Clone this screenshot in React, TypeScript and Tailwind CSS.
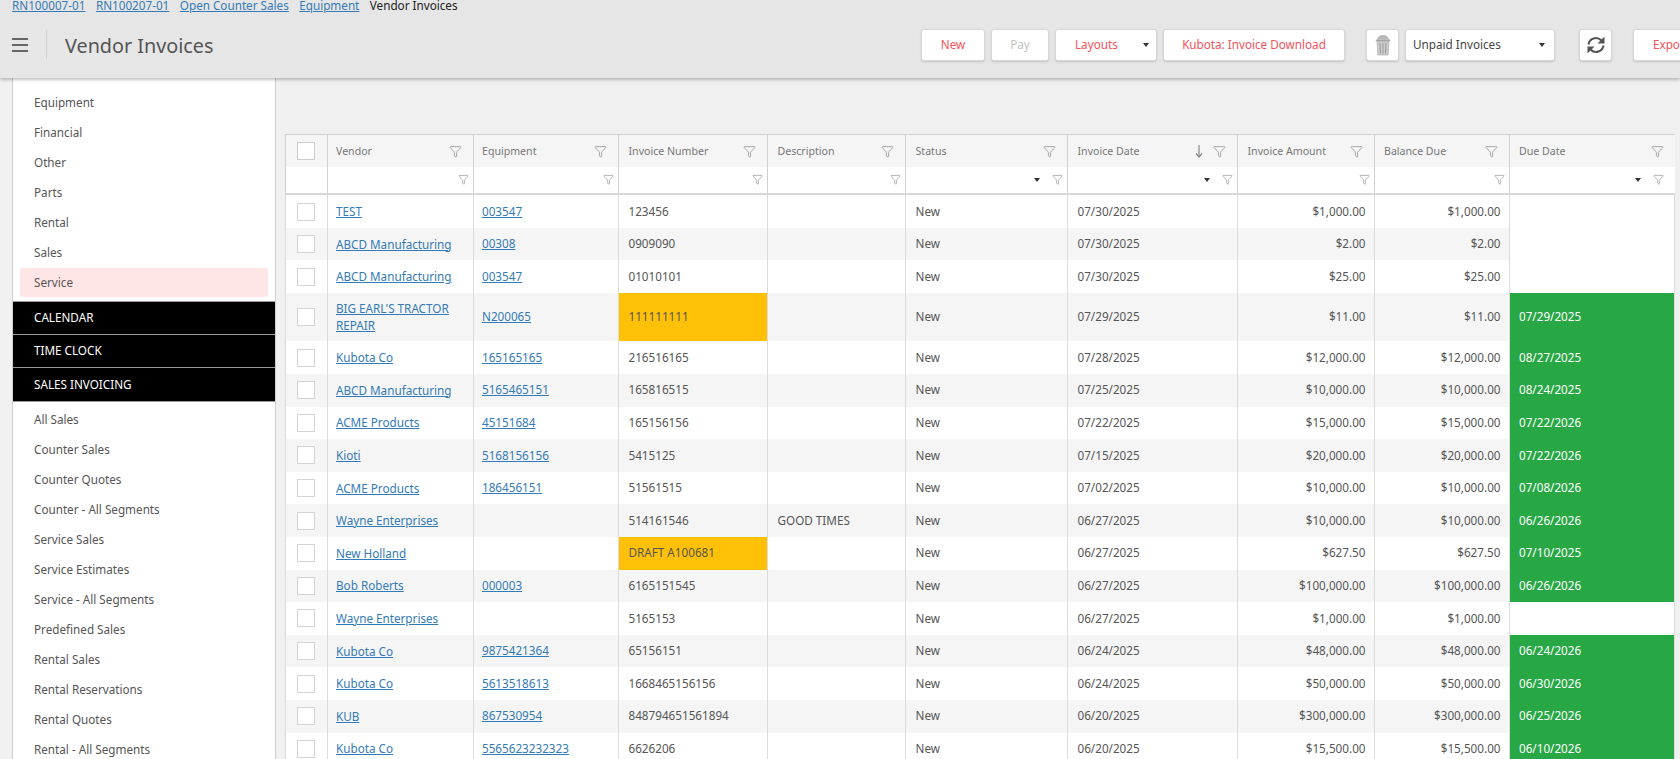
import { Filter } from 'lucide-react'

const FONT = "font-['Noto_Sans','Open_Sans',sans-serif]"
const GRID = 'grid grid-cols-[42px_146px_145px_149px_138px_162px_170px_136.5px_135px_166px]'

const BREADCRUMBS = ['RN100007-01', 'RN100207-01', 'Open Counter Sales', 'Equipment']

const TOP_ITEMS = ['Equipment', 'Financial', 'Other', 'Parts', 'Rental', 'Sales']
const BLACK_ITEMS = ['CALENDAR', 'TIME CLOCK', 'SALES INVOICING']
const BOTTOM_ITEMS = [
  'All Sales',
  'Counter Sales',
  'Counter Quotes',
  'Counter - All Segments',
  'Service Sales',
  'Service Estimates',
  'Service - All Segments',
  'Predefined Sales',
  'Rental Sales',
  'Rental Reservations',
  'Rental Quotes',
  'Rental - All Segments',
]

const COLUMNS = [
  { label: 'Vendor' },
  { label: 'Equipment' },
  { label: 'Invoice Number' },
  { label: 'Description' },
  { label: 'Status', select: true },
  { label: 'Invoice Date', select: true, sorted: true },
  { label: 'Invoice Amount' },
  { label: 'Balance Due' },
  { label: 'Due Date', select: true },
]

type Row = {
  vendor: string
  equipment: string
  number: string
  description?: string
  date: string
  amount: string
  due: string
  flagged?: boolean
  tall?: boolean
}

const ROWS: Row[] = [
  { vendor: 'TEST', equipment: '003547', number: '123456', date: '07/30/2025', amount: '$1,000.00', due: '' },
  { vendor: 'ABCD Manufacturing', equipment: '00308', number: '0909090', date: '07/30/2025', amount: '$2.00', due: '' },
  { vendor: 'ABCD Manufacturing', equipment: '003547', number: '01010101', date: '07/30/2025', amount: '$25.00', due: '' },
  { vendor: "BIG EARL'S TRACTOR REPAIR", equipment: 'N200065', number: '111111111', date: '07/29/2025', amount: '$11.00', due: '07/29/2025', flagged: true, tall: true },
  { vendor: 'Kubota Co', equipment: '165165165', number: '216516165', date: '07/28/2025', amount: '$12,000.00', due: '08/27/2025' },
  { vendor: 'ABCD Manufacturing', equipment: '5165465151', number: '165816515', date: '07/25/2025', amount: '$10,000.00', due: '08/24/2025' },
  { vendor: 'ACME Products', equipment: '45151684', number: '165156156', date: '07/22/2025', amount: '$15,000.00', due: '07/22/2026' },
  { vendor: 'Kioti', equipment: '5168156156', number: '5415125', date: '07/15/2025', amount: '$20,000.00', due: '07/22/2026' },
  { vendor: 'ACME Products', equipment: '186456151', number: '51561515', date: '07/02/2025', amount: '$10,000.00', due: '07/08/2026' },
  { vendor: 'Wayne Enterprises', equipment: '', number: '514161546', description: 'GOOD TIMES', date: '06/27/2025', amount: '$10,000.00', due: '06/26/2026' },
  { vendor: 'New Holland', equipment: '', number: 'DRAFT A100681', date: '06/27/2025', amount: '$627.50', due: '07/10/2025', flagged: true },
  { vendor: 'Bob Roberts', equipment: '000003', number: '6165151545', date: '06/27/2025', amount: '$100,000.00', due: '06/26/2026' },
  { vendor: 'Wayne Enterprises', equipment: '', number: '5165153', date: '06/27/2025', amount: '$1,000.00', due: '' },
  { vendor: 'Kubota Co', equipment: '9875421364', number: '65156151', date: '06/24/2025', amount: '$48,000.00', due: '06/24/2026' },
  { vendor: 'Kubota Co', equipment: '5613518613', number: '1668465156156', date: '06/24/2025', amount: '$50,000.00', due: '06/30/2026' },
  { vendor: 'KUB', equipment: '867530954', number: '848794651561894', date: '06/20/2025', amount: '$300,000.00', due: '06/25/2026' },
  { vendor: 'Kubota Co', equipment: '5565623232323', number: '6626206', date: '06/20/2025', amount: '$15,500.00', due: '06/10/2026' },
]

function Caret() {
  return <span className="h-0 w-0 border-x-[3.5px] border-t-[4px] border-x-transparent border-t-[#333]" />
}

function ToolButton({ label, muted, caret, className }: { label: string; muted?: boolean; caret?: boolean; className: string }) {
  return (
    <button
      className={`relative flex h-8 shrink-0 items-center justify-center rounded-[3px] border border-[#d8d8d8] bg-white text-[11.7px] shadow-[0_1px_2px_rgba(0,0,0,0.15)] ${muted ? 'text-[#c4c4c4]' : 'text-[#f4525a]'} ${className}`}
    >
      {label}
      {caret && (
        <span className="absolute right-[7px] top-[13px] flex">
          <Caret />
        </span>
      )}
    </button>
  )
}

function Header() {
  return (
    <header className="relative z-10 h-[78px] shrink-0 bg-[#e6e6e6] shadow-[0_1px_4px_rgba(0,0,0,0.35)]">
      <div className="flex h-[11px] items-center gap-[10.5px] pl-3 text-[11.7px] leading-none">
        {BREADCRUMBS.map((b) => (
          <a key={b} className="text-[#337ab7] underline">
            {b}
          </a>
        ))}
        <span className="text-[#222]">Vendor Invoices</span>
      </div>
      <div className="flex h-[67px] items-center overflow-hidden">
        <div className="ml-3 flex w-4 shrink-0 flex-col gap-[4px]">
          <span className="h-[2px] bg-[#666]" />
          <span className="h-[2px] bg-[#666]" />
          <span className="h-[2px] bg-[#666]" />
        </div>
        <span className="ml-[18px] h-[29px] w-px shrink-0 bg-[#d2d2d2]" />
        <h1 className="ml-[18px] w-[856px] shrink-0 pt-[2px] text-[19.8px] text-[#555]">Vendor Invoices</h1>
        <ToolButton label="New" className="w-[64px]" />
        <ToolButton label="Pay" muted className="ml-[6px] w-[58px]" />
        <ToolButton label="Layouts" caret className="ml-[6px] w-[102px] justify-start pl-[19px]" />
        <ToolButton label="Kubota: Invoice Download" className="ml-[6px] w-[182px]" />
        <button className="ml-[21px] flex h-8 w-[33px] shrink-0 items-center justify-center rounded-[3px] border border-[#d8d8d8] bg-white shadow-[0_1px_2px_rgba(0,0,0,0.15)]">
          <svg width="16" height="22" viewBox="0 0 16 22">
            <path d="M2 5.500C2.500 2.500 5 1 8 1s5.500 1.500 6 4.500z" fill="#b9b9b9" />
            <path d="M.8 5.500h14.400v1.700H.8z" fill="#a5a5a5" />
            <path d="M2 7.500h12l-.9 13.500H2.900z" fill="#cdcdcd" stroke="#a5a5a5" strokeWidth=".6" />
            <path d="M5 9l.4 10.500M8 9v10.500M11 9l-.4 10.500" stroke="#999" strokeWidth="1" />
          </svg>
        </button>
        <div className="relative ml-[6px] flex h-8 w-[150px] shrink-0 items-center rounded-[3px] border border-[#d8d8d8] bg-white pl-[7px] text-[11.7px] text-[#444] shadow-[0_1px_2px_rgba(0,0,0,0.15)]">
          Unpaid Invoices
          <span className="absolute right-[9px] top-[13px] flex">
            <Caret />
          </span>
        </div>
        <button className="ml-[24px] flex h-8 w-[33px] shrink-0 items-center justify-center rounded-[3px] border border-[#d8d8d8] bg-white shadow-[0_1px_2px_rgba(0,0,0,0.15)]">
          <svg width="20" height="20" viewBox="0 0 20 20" fill="none" stroke="#555" strokeWidth="2">
            <path d="M2.500 9.500A7.500 7.500 0 0 1 15.200 5.200L16.500 6.500" />
            <path d="M18.500 1.500V8.500H11.500z" fill="#555" stroke="none" />
            <path d="M17.500 10.500A7.500 7.500 0 0 1 4.800 14.800L3.500 13.500" />
            <path d="M1.500 18.500V11.500H8.500z" fill="#555" stroke="none" />
          </svg>
        </button>
        <ToolButton label="Export" className="ml-[21px] w-[76px]" />
      </div>
    </header>
  )
}

function SideItem({ label }: { label: string }) {
  return <div className="flex h-[30px] items-center pl-[21px] text-[11.7px] text-[#555]">{label}</div>
}

function Sidebar() {
  return (
    <aside className="ml-3 w-[263.5px] shrink-0 overflow-hidden border-x border-[#cfcfcf] bg-white">
      <div className="pt-[10px]">
        {TOP_ITEMS.map((i) => (
          <SideItem key={i} label={i} />
        ))}
        <div className="mx-[7px] flex h-[29px] items-center rounded-[2px] bg-[#ffe5e5] pl-[14px] text-[11.7px] text-[#555]">
          Service
        </div>
      </div>
      <div className="mt-[4px] border-b border-t border-[#999]">
        {BLACK_ITEMS.map((i) => (
          <div key={i} className="flex h-[33px] items-center border-b border-[#999] bg-black pl-[21px] text-[11.7px] text-white last:border-b-0">
            {i}
          </div>
        ))}
      </div>
      <div className="pt-[3px]">
        {BOTTOM_ITEMS.map((i) => (
          <SideItem key={i} label={i} />
        ))}
      </div>
    </aside>
  )
}

function FilterIcon({ small }: { small?: boolean }) {
  return <Filter className={`${small ? 'size-[11px]' : 'size-[13px]'} shrink-0 text-[#8e8e8e]`} strokeWidth={1.4} />
}

function SortArrow() {
  return (
    <svg width="8" height="13" viewBox="0 0 8 13" fill="none" stroke="#888" strokeWidth="1.200">
      <path d="M4 0v11.500" />
      <path d="M1 8.500l3 3.500 3-3.500" />
    </svg>
  )
}

function HeadRows() {
  return (
    <>
      <div className={`${GRID} h-[32.5px] border-t border-[#d0d0d0] bg-[#f5f5f5] text-[10.6px] text-[#777]`}>
        <div className="flex items-center justify-center border-l border-[#d0d0d0] pr-[2px]">
          <span className="size-[18px] border border-[#ccc] bg-white" />
        </div>
        {COLUMNS.map((c, i) => (
          <div key={c.label} className={`flex items-center gap-[10px] border-l border-[#d0d0d0] pr-[11px] pt-[2px] ${i < 2 ? 'pl-[8px]' : 'pl-[9.5px]'}`}>
            <span className="flex-1">{c.label}</span>
            {c.sorted && <SortArrow />}
            <FilterIcon />
          </div>
        ))}
      </div>
      <div className={`${GRID} h-[28.8px] border-b-2 border-[#d8d8d8] bg-white`}>
        <div className="border-l border-[#d0d0d0]" />
        {COLUMNS.map((c, i) => (
          <div key={c.label} className={`flex items-center justify-end gap-[12px] border-l border-[#d0d0d0] ${i === 8 ? 'pr-[11px]' : 'pr-[4px]'}`}>
            {c.select && <Caret />}
            <FilterIcon small />
          </div>
        ))}
      </div>
    </>
  )
}

function TableRow({ row, striped }: { row: Row; striped: boolean }) {
  const cell = 'flex items-center border-l border-[#dcdcdc] pl-[9.5px] pr-[8px]'
  const linkCell = 'flex items-center border-l border-[#dcdcdc] px-[8px]'
  return (
    <div className={`${GRID} text-[11.7px] text-[#555] ${row.tall ? 'h-[48.3px]' : 'h-[32.6px]'} ${striped ? 'bg-[#f5f5f5]' : 'bg-white'}`}>
      <div className="flex items-center justify-center border-l border-[#dcdcdc] pr-[2px]">
        <span className="size-[18px] border border-[#d4d4d4] bg-white" />
      </div>
      <div className={`${linkCell} leading-[17px]`}>
        <a className="text-[#337ab7] underline">{row.vendor}</a>
      </div>
      <div className={linkCell}>
        <a className="text-[#337ab7] underline">{row.equipment}</a>
      </div>
      <div className={`${cell} ${row.flagged ? 'bg-[#ffc107]' : ''}`}>{row.number}</div>
      <div className={cell}>{row.description}</div>
      <div className={cell}>New</div>
      <div className={cell}>{row.date}</div>
      <div className={`${cell} justify-end`}>{row.amount}</div>
      <div className={`${cell} justify-end`}>{row.amount}</div>
      <div className={`${cell} border-r ${row.due ? 'bg-[#28a745] text-white' : 'bg-white'}`}>{row.due}</div>
    </div>
  )
}

export default function App() {
  return (
    <div className={`${FONT} flex h-[759px] w-[1680px] flex-col overflow-hidden bg-[#f0f0f0]`}>
      <Header />
      <div className="flex min-h-0 flex-1 overflow-hidden">
        <Sidebar />
        <main className="pl-[9.5px] pt-[56px]">
          <HeadRows />
          {ROWS.map((r, i) => (
            <TableRow key={i} row={r} striped={i % 2 === 1} />
          ))}
        </main>
      </div>
    </div>
  )
}
